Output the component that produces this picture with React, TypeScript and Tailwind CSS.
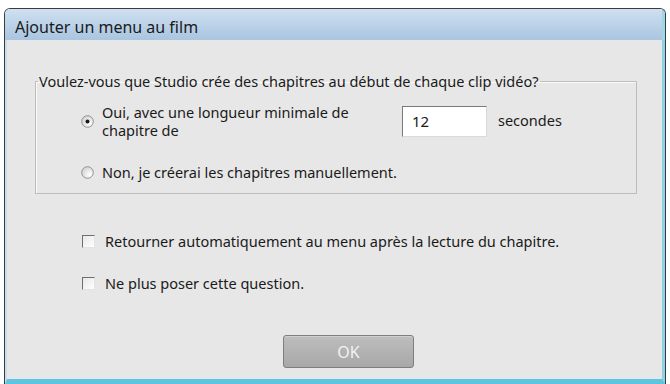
import React from "react";

function Radio({ checked }: { checked?: boolean }) {
  return (
    <svg width="13" height="13" viewBox="0 0 13 13" className="shrink-0">
      <defs>
        <radialGradient id={checked ? "rg1" : "rg2"} cx="0.7" cy="0.7" r="0.8">
          <stop offset="0" stopColor="#ffffff" />
          <stop offset="1" stopColor="#d0d0d0" />
        </radialGradient>
      </defs>
      <circle cx="6.5" cy="6.5" r="5.8" fill={`url(#${checked ? "rg1" : "rg2"})`} stroke="#929292" strokeWidth="1" />
      {checked && <circle cx="6.5" cy="6.5" r="2" fill="#1a1a1a" />}
    </svg>
  );
}

function Checkbox() {
  return (
    <div className="w-[13px] h-[13px] shrink-0 border-t border-l border-t-[#6e6e6e] border-l-[#6e6e6e] border-r border-b border-r-[#e4e4e4] border-b-[#e4e4e4] bg-gradient-to-br from-[#e8e8e8] to-white" />
  );
}

export default function App() {
  return (
    <div
      className="w-[670px] h-[384px] bg-white pt-[8px] pl-[4px] pr-[4px] overflow-hidden text-[#1a1a1a]"
      style={{ fontFamily: '"Noto Sans", "Open Sans", sans-serif' }}
    >
      <div className="h-[376px] flex flex-col border border-[#3c3c3c] border-b-0 rounded-tl-[6px] rounded-tr-[6px] overflow-hidden">
        <div className="h-[31px] shrink-0 bg-gradient-to-b from-[#cfe0f1] to-[#a9c5e0] flex items-center pl-[10px] text-[16px] leading-none border-r-[3px] border-r-[#9fd6ea]">
          <span className="mt-[4px]">Ajouter un menu au film</span>
        </div>
        <div className="flex-1 flex flex-col bg-[#e7e7e7] border-l-[2px] border-l-[#c6dff0] border-r-[3px] border-r-[#8fd2e6] border-b-[5px] border-b-[#5ec5de] text-[14.5px]">
          <fieldset className="mt-[32px] ml-[28px] mr-[25px] border border-[#bdbdbd] pl-[2px] pr-[10px] pb-[12px] shadow-[inset_1px_1px_0_#fafafa]">
            <legend className="px-[1px] leading-[18px]">
              Voulez-vous que Studio crée des chapitres au début de chaque clip vidéo?
            </legend>
            <div className="pl-[43px]">
              <div className="flex items-center mt-[13px]">
                <Radio checked />
                <div className="w-[300px] ml-[8px] leading-[18px]">
                  Oui, avec une longueur minimale de chapitre de
                </div>
                <div className="w-[85px] h-[31px] bg-white border-t border-l border-t-[#7a7a7a] border-l-[#7a7a7a] border-r border-b border-r-[#dadada] border-b-[#dadada] flex items-center pl-[9px] text-[15px]">
                  12
                </div>
                <span className="ml-[11px]">secondes</span>
              </div>
              <div className="flex items-center mt-[24px] leading-[18px]">
                <Radio />
                <span className="ml-[8px]">Non, je créerai les chapitres manuellement.</span>
              </div>
            </div>
          </fieldset>
          <div className="flex items-center ml-[75px] mt-[38px] leading-[18px]">
            <Checkbox />
            <span className="ml-[10px]">Retourner automatiquement au menu après la lecture du chapitre.</span>
          </div>
          <div className="flex items-center ml-[75px] mt-[24px] leading-[18px]">
            <Checkbox />
            <span className="ml-[10px]">Ne plus poser cette question.</span>
          </div>
          <div className="ml-[276px] mt-[43px] w-[131px] h-[33px] rounded-[3px] border border-[#7e7e7e] bg-gradient-to-b from-[#bdbdbd] to-[#a8a8a8] flex items-center justify-center text-[16px] text-[#f2f2f2] shadow-[inset_0_1px_0_#cfcfcf]">
            OK
          </div>
        </div>
      </div>
    </div>
  );
}
